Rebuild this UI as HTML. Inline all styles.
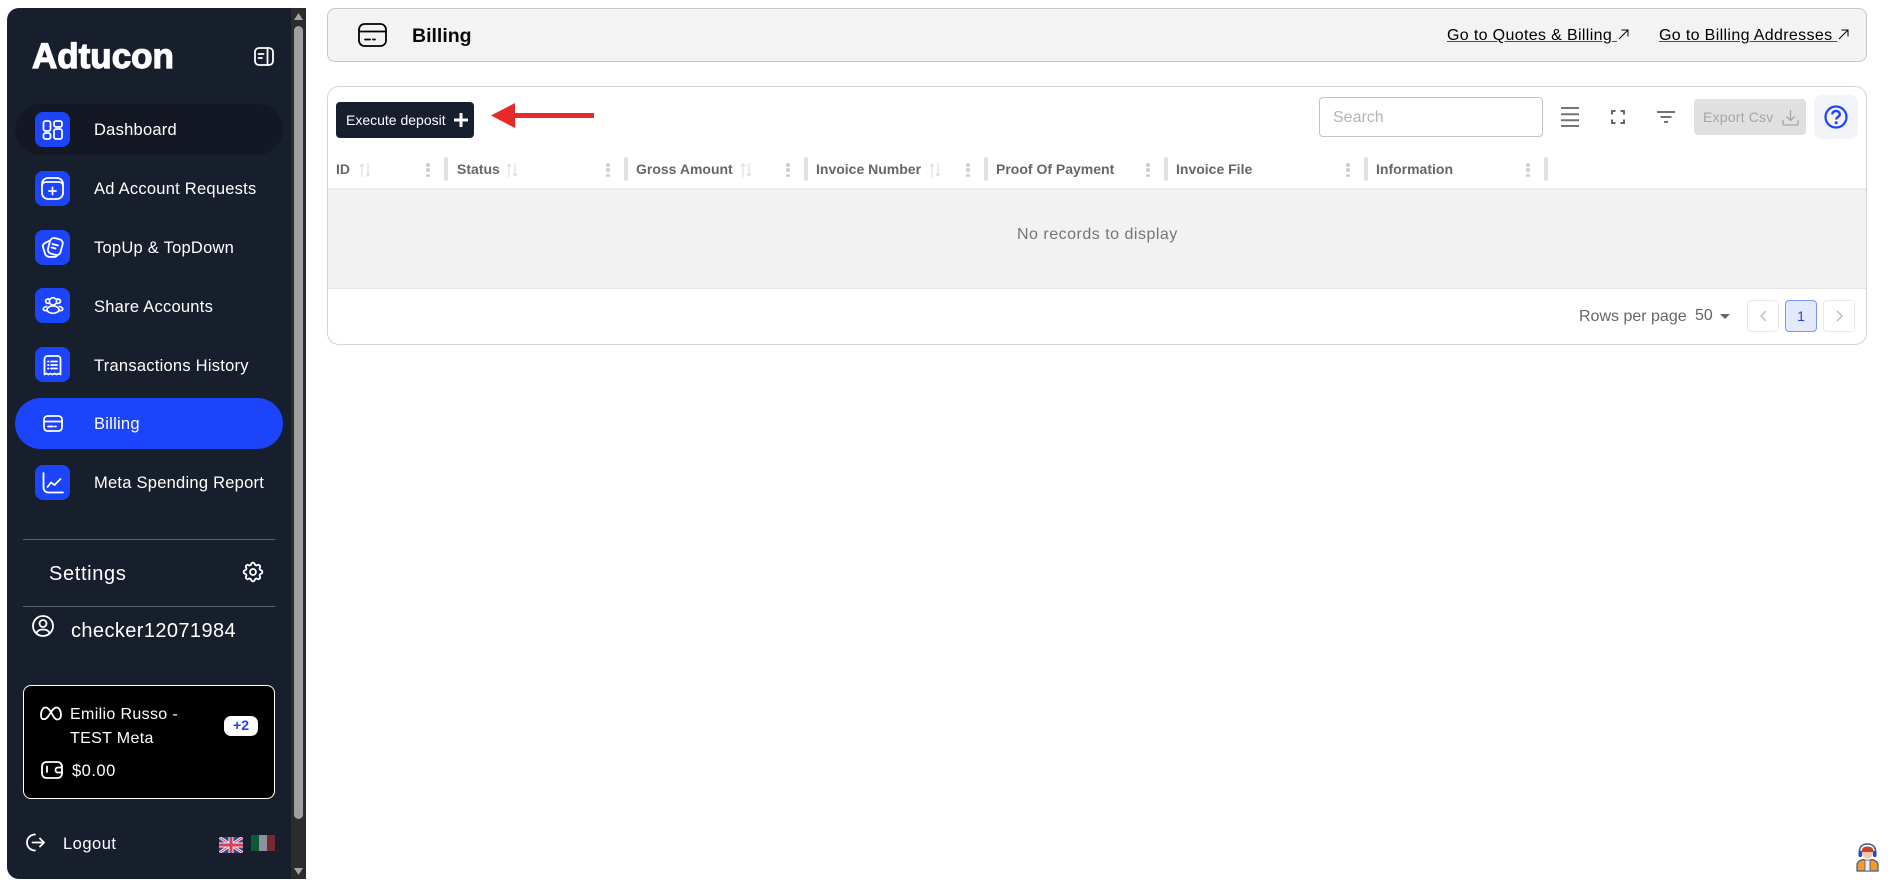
<!DOCTYPE html>
<html lang="en">
<head>
<meta charset="utf-8">
<title>Billing</title>
<style>
html,body{margin:0;padding:0;width:1897px;height:886px;overflow:hidden;background:#fff;font-family:"Liberation Sans",sans-serif;}
.a{position:absolute;white-space:nowrap;}
.t{position:absolute;white-space:nowrap;line-height:20px;}
svg{position:absolute;display:block;fill:none;}
.side{position:absolute;left:7px;top:8px;width:284px;height:871px;background:#171e2c;border-radius:12px 0 0 12px;}
.ib{position:absolute;left:35px;width:35px;height:35px;border-radius:8px;background:#1c44fb;}
.ni{position:absolute;left:94px;color:#fff;font-size:16.5px;line-height:20px;letter-spacing:.25px;white-space:nowrap;}
.w{stroke:#fff;stroke-width:1.8;stroke-linecap:round;stroke-linejoin:round;}
.th{position:absolute;top:160px;font-size:14px;font-weight:700;color:#666;line-height:18px;white-space:nowrap;}
.sep{position:absolute;top:157px;width:4px;height:24px;background:#e0e0e0;border-radius:2px;}
.dots{position:absolute;top:163px;width:4px;height:14px;}
.dots i{display:block;width:3.5px;height:3.5px;border-radius:50%;background:#cfcfcf;margin-bottom:1.8px;}
.pg{position:absolute;top:300px;width:30px;height:30px;border:1px solid #e8e8e8;border-radius:4px;background:#fff;}
a{color:#000;text-decoration:underline;text-decoration-color:#1c44fb;letter-spacing:.35px;}
a svg{position:static;display:inline-block;vertical-align:0;margin-left:1px;}
</style>
</head>
<body>
<!-- sidebar -->
<div class="side"></div>
<div class="a" style="left:291px;top:8px;width:15px;height:871px;background:#2c2c2c;"></div>
<div class="a" style="left:294px;top:26px;width:9px;height:793px;background:#9f9f9f;border-radius:5px;"></div>
<svg style="left:294px;top:13px" width="9" height="7"><path d="M4.5 0L9 7H0Z" fill="#a5a5a5"/></svg>
<svg style="left:294px;top:868px" width="9" height="7"><path d="M0 0H9L4.5 7Z" fill="#a5a5a5"/></svg>

<div class="a" style="left:32px;top:37px;font-size:35px;line-height:40px;font-weight:700;color:#fff;-webkit-text-stroke:1.2px #fff;">Adtucon</div>
<svg style="left:254px;top:47px" width="20" height="19" viewBox="0 0 20 19"><rect class="w" x="1" y="1" width="18" height="17" rx="4"/><path class="w" d="M13.500 1V18M4.500 7H9.500M4.500 11H8"/></svg>

<div class="a" style="left:15px;top:104px;width:268px;height:51px;border-radius:26px;background:#131824;"></div>
<div class="a" style="left:15px;top:398px;width:268px;height:51px;border-radius:26px;background:#1c44fb;"></div>

<div class="ib" style="top:112px"></div>
<svg style="left:42px;top:120px" width="21" height="20" viewBox="0 0 21 20"><rect class="w" x="1.500" y="1" width="7" height="10" rx="2"/><rect class="w" x="12" y="1" width="8" height="6" rx="2"/><rect class="w" x="1.500" y="13" width="7" height="6" rx="2"/><rect class="w" x="12" y="9" width="8" height="10" rx="2"/></svg>
<div class="ni" style="top:120px">Dashboard</div>

<div class="ib" style="top:171px"></div>
<svg style="left:41px;top:177px" width="23" height="23" viewBox="0 0 23 23"><rect class="w" x="1" y="1" width="21" height="21" rx="6"/><path class="w" d="M1 9C1 6.500 3 5 5.500 5H17.500C20 5 22 6.500 22 9M11.500 10.500V17.500M8 14H15"/></svg>
<div class="ni" style="top:179px">Ad Account Requests</div>

<div class="ib" style="top:230px"></div>
<svg style="left:41px;top:236px" width="23" height="23" viewBox="0 0 23 23"><rect class="w" x="7.800" y="2.500" width="13" height="16" rx="4" transform="rotate(15 14.300 10.500)"/><path class="w" d="M8 5L4 7C2.500 8 1.500 9.500 2 11L4 17.500C4.500 19.500 6 20.500 8 20.800L13 21C14.500 21 15.500 20.500 16 19.500"/><path class="w" d="M11.500 8L17 9.500M10.500 11.500L14.500 12.500"/></svg>
<div class="ni" style="top:238px">TopUp &amp; TopDown</div>

<div class="ib" style="top:288px"></div>
<svg style="left:42px;top:296px" width="22" height="19" viewBox="0 0 24 19"><circle class="w" cx="12" cy="5" r="4"/><ellipse class="w" cx="12" cy="14" rx="6.500" ry="4"/><path class="w" d="M7.500 2.500C5 2 3.500 4 4 5.500C4.500 7 6.500 7.500 8 7M16.500 2.500C19 2 20.500 4 20 5.500C19.500 7 17.500 7.500 16 7M5 10.500C2.500 11 1 12.500 1.500 14C2 15 4 15.500 5.500 15M19 10.500C21.500 11 23 12.500 22.500 14C22 15 20 15.500 18.500 15"/></svg>
<div class="ni" style="top:297px">Share Accounts</div>

<div class="ib" style="top:347px"></div>
<svg style="left:43px;top:355px" width="19" height="21" viewBox="0 0 19 21"><path class="w" d="M1.500 4C1.500 2.300 2.800 1 4.500 1H14.500C16.200 1 17.500 2.300 17.500 4V19.500L15.500 18.500L13.500 19.500L11.500 18.500L9.500 19.500L7.500 18.500L5.500 19.500L3.500 18.500L1.500 19.500Z"/><path class="w" d="M5 6.500H5.500M8 6.500H14M5 10H5.500M8 10H14M5 13.500H5.500M8 13.500H14"/></svg>
<div class="ni" style="top:356px">Transactions History</div>

<svg style="left:43px;top:415px" width="20" height="17" viewBox="0 0 20 17"><rect class="w" x="1" y="1" width="18" height="15" rx="3.500"/><path class="w" d="M1 6.500H19M5 11.500H10M12 11.500H13"/></svg>
<div class="ni" style="top:414px">Billing</div>

<div class="ib" style="top:465px"></div>
<svg style="left:42px;top:472px" width="22" height="22" viewBox="0 0 22 22"><path class="w" d="M1.500 1V15C1.500 18.500 3.500 20.500 7 20.500H21M5.500 15L9 10.500L12.500 13L18.500 7"/></svg>
<div class="ni" style="top:473px">Meta Spending Report</div>

<div class="a" style="left:23px;top:539px;width:252px;height:1px;background:#5c6068;"></div>
<div class="t" style="left:49px;top:564px;font-size:20px;color:#fff;letter-spacing:.65px;">Settings</div>
<svg style="left:241px;top:560px" width="24" height="24" viewBox="0 0 24 24"><path class="w" d="M10.300 2.600C10.800.8 13.200.8 13.700 2.600C14 3.800 15.400 4.400 16.500 3.700C18.100 2.800 19.800 4.500 18.900 6.100C18.200 7.200 18.800 8.600 20 8.900C21.800 9.400 21.800 11.800 20 12.300H20C18.800 12.600 18.200 14 18.900 15.100C19.800 16.700 18.100 18.400 16.500 17.500C15.400 16.800 14 17.400 13.700 18.600C13.200 20.400 10.800 20.400 10.300 18.600C10 17.400 8.600 16.800 7.500 17.500C5.900 18.400 4.200 16.700 5.100 15.100C5.800 14 5.200 12.600 4 12.300C2.200 11.800 2.200 9.400 4 8.900C5.200 8.600 5.800 7.200 5.100 6.100C4.200 4.500 5.900 2.800 7.500 3.700C8.600 4.400 10 3.800 10.300 2.600Z" transform="translate(0 1.400)"/><circle class="w" cx="12" cy="12" r="3"/></svg>
<div class="a" style="left:23px;top:606px;width:252px;height:1px;background:#5c6068;"></div>
<svg style="left:32px;top:615px" width="22" height="22" viewBox="0 0 22 22"><circle class="w" cx="11" cy="11" r="10"/><circle class="w" cx="11" cy="8.500" r="3.500"/><path class="w" d="M4.500 18C5.500 15.500 8 14.500 11 14.500C14 14.500 16.500 15.500 17.500 18"/></svg>
<div class="t" style="left:71px;top:621px;font-size:20px;color:#fff;letter-spacing:.4px;">checker12071984</div>

<div class="a" style="left:23px;top:685px;width:250px;height:112px;background:#000;border:1px solid #fff;border-radius:8px;"></div>
<svg style="left:40px;top:706px" width="22" height="15" viewBox="0 0 22 15"><path class="w" d="M3 13C1.800 13 1 11.500 1 9C1 4.500 3 1.500 5.500 1.500C8.500 1.500 11 6 13.500 10.500C14.700 12.500 15.800 13.500 17.300 13.500C19.500 13.500 21 12 21 9C21 4.500 19 1.500 16.500 1.500C13.500 1.500 11 6 8.500 10C7 12.300 5 13.500 3 13Z"/></svg>
<div class="t" style="left:70px;top:705px;font-size:16px;color:#fff;letter-spacing:.35px;">Emilio Russo -</div>
<div class="t" style="left:70px;top:729px;font-size:16px;color:#fff;letter-spacing:.35px;">TEST Meta</div>
<div class="a" style="left:224px;top:716px;width:34px;height:20px;background:#fff;border-radius:7px;"></div>
<div class="t" style="left:224px;top:715px;width:34px;text-align:center;font-size:14px;font-weight:700;color:#2140f0;">+2</div>
<svg style="left:41px;top:761px" width="22" height="18" viewBox="0 0 22 18"><rect class="w" x="1" y="1" width="20" height="16" rx="4.500"/><path class="w" d="M6 5.500V11M21 6.500H17C15.500 6.500 14.500 7.500 14.500 9C14.500 10.500 15.500 11.500 17 11.500H21"/></svg>
<div class="t" style="left:72px;top:761px;font-size:16.500px;color:#fff;letter-spacing:.5px;">$0.00</div>

<svg style="left:26px;top:833px" width="19" height="19" viewBox="0 0 19 19"><path class="w" d="M9 1.500C4.500 1.500 1 5 1 9.500C1 14 4.500 17.500 9 17.500M6.500 9.500H18M14 5.500L18 9.500L14 13.500"/></svg>
<div class="t" style="left:63px;top:834px;font-size:16.500px;color:#fff;letter-spacing:.5px;">Logout</div>
<svg style="left:219px;top:837px" width="24" height="16" viewBox="0 0 24 16"><rect width="24" height="16" fill="#3a4590"/><path d="M0 0L24 16M24 0L0 16" stroke="#ececf2" stroke-width="3"/><path d="M0 0L24 16M24 0L0 16" stroke="#d8405a" stroke-width="1"/><path d="M12 0V16M0 8H24" stroke="#ececf2" stroke-width="5"/><path d="M12 0V16M0 8H24" stroke="#d8405a" stroke-width="3"/></svg>
<svg style="left:251px;top:835px" width="24" height="16" viewBox="0 0 24 16"><rect width="8" height="16" fill="#0c5a3a"/><rect x="8" width="8" height="16" fill="#8f929e"/><rect x="16" width="8" height="16" fill="#782733"/></svg>

<!-- header -->
<div class="a" style="left:327px;top:8px;width:1538px;height:52px;background:#f3f3f3;border:1px solid #c8c8c8;border-radius:8px;"></div>
<svg style="left:358px;top:23px" width="29" height="24" viewBox="0 0 29 24"><rect x="1" y="1" width="27" height="22" rx="5.500" stroke="#000" stroke-width="1.800"/><path d="M1 8.500H28M7 16.500H12M15 16.500H17" stroke="#000" stroke-width="1.800" stroke-linecap="round"/></svg>
<div class="t" style="left:412px;top:26px;font-size:19.500px;font-weight:700;color:#0a0a0a;">Billing</div>
<div class="t" style="left:1447px;top:26px;font-size:16px;"><a>Go to Quotes &amp; Billing <svg width="11" height="11" viewBox="0 0 11 11"><path d="M1 10L10 1M3.500 1H10V7.500" stroke="#000" stroke-width="1"/></svg></a></div>
<div class="t" style="left:1659px;top:26px;font-size:16px;"><a>Go to Billing Addresses <svg width="11" height="11" viewBox="0 0 11 11"><path d="M1 10L10 1M3.500 1H10V7.500" stroke="#000" stroke-width="1"/></svg></a></div>

<!-- card -->
<div class="a" style="left:327px;top:86px;width:1538px;height:257px;border:1px solid #d5d5d5;border-radius:12px;"></div>
<div class="a" style="left:336px;top:102px;width:138px;height:36px;background:#171e2e;border-radius:4px;"></div>
<div class="t" style="left:346px;top:110px;font-size:14px;color:#fff;">Execute deposit</div>
<svg style="left:454px;top:113px" width="14" height="14" viewBox="0 0 14 14"><path d="M7 0V14M0 7H14" stroke="#fff" stroke-width="3"/></svg>
<svg style="left:490px;top:102px" width="106" height="28" viewBox="0 0 106 28"><path d="M1 13.500L25 1V11H104V16H25V26Z" fill="#e92a2a"/></svg>

<div class="a" style="left:1319px;top:97px;width:222px;height:38px;border:1px solid #c4c4c4;border-radius:4px;"></div>
<div class="t" style="left:1333px;top:108px;font-size:16px;color:#b4b4b4;">Search</div>
<svg style="left:1561px;top:107px" width="18" height="20" viewBox="0 0 18 20"><path d="M0 1H18M0 7.300H18M0 13.300H18M0 19H18" stroke="#757575" stroke-width="2"/></svg>
<svg style="left:1611px;top:110px" width="14" height="14" viewBox="0 0 14 14"><path d="M1 4.500V1H4.500M9.500 1H13V4.500M13 9.500V13H9.500M4.500 13H1V9.500" stroke="#666" stroke-width="2"/></svg>
<svg style="left:1657px;top:111px" width="18" height="12" viewBox="0 0 18 12"><path d="M0 1H18M3.500 6H14.500M7 11H11" stroke="#757575" stroke-width="2"/></svg>
<div class="a" style="left:1694px;top:99px;width:112px;height:36px;background:#e0e0e0;border-radius:4px;"></div>
<div class="t" style="left:1703px;top:107px;font-size:14px;color:#a6a6a6;letter-spacing:.2px;">Export Csv</div>
<svg style="left:1782px;top:109px" width="17" height="17" viewBox="0 0 17 17"><path d="M8.500 1V11M4.500 7.500L8.500 11.500L12.500 7.500M1 11V15C1 15.600 1.500 16 2 16H15C15.500 16 16 15.600 16 15V11" stroke="#a6a6a6" stroke-width="1.300"/></svg>
<div class="a" style="left:1814px;top:95px;width:44px;height:44px;background:#f3f4f7;border-radius:8px;"></div>
<svg style="left:1824px;top:105px" width="24" height="24" viewBox="0 0 24 24"><circle cx="12" cy="12" r="10.500" stroke="#1c44fb" stroke-width="2.200"/><path d="M8.300 9.500C8.300 7.300 10 6 12 6C14.200 6 15.800 7.400 15.800 9.300C15.800 11.900 12.200 11.900 12.200 14.500" stroke="#1c44fb" stroke-width="2.400"/><circle cx="12.200" cy="17.800" r="1.500" fill="#1c44fb"/></svg>

<!-- table head -->
<div class="th" style="left:336px">ID</div>
<div class="th" style="left:457px">Status</div>
<div class="th" style="left:636px">Gross Amount</div>
<div class="th" style="left:816px">Invoice Number</div>
<div class="th" style="left:996px">Proof Of Payment</div>
<div class="th" style="left:1176px">Invoice File</div>
<div class="th" style="left:1376px">Information</div>
<svg style="left:359px;top:163px" width="12" height="14" viewBox="0 0 12 14"><path d="M3 14V1M1 3.500L3 1L5 3.500M9 0V13M7 10.500L9 13L11 10.500" stroke="#d8d8d8" stroke-width="1"/></svg>
<svg style="left:506px;top:163px" width="12" height="14" viewBox="0 0 12 14"><path d="M3 14V1M1 3.500L3 1L5 3.500M9 0V13M7 10.500L9 13L11 10.500" stroke="#d8d8d8" stroke-width="1"/></svg>
<svg style="left:740px;top:163px" width="12" height="14" viewBox="0 0 12 14"><path d="M3 14V1M1 3.500L3 1L5 3.500M9 0V13M7 10.500L9 13L11 10.500" stroke="#d8d8d8" stroke-width="1"/></svg>
<svg style="left:929px;top:163px" width="12" height="14" viewBox="0 0 12 14"><path d="M3 14V1M1 3.500L3 1L5 3.500M9 0V13M7 10.500L9 13L11 10.500" stroke="#d8d8d8" stroke-width="1"/></svg>
<div class="dots" style="left:426px"><i></i><i></i><i></i></div>
<div class="dots" style="left:606px"><i></i><i></i><i></i></div>
<div class="dots" style="left:786px"><i></i><i></i><i></i></div>
<div class="dots" style="left:966px"><i></i><i></i><i></i></div>
<div class="dots" style="left:1146px"><i></i><i></i><i></i></div>
<div class="dots" style="left:1346px"><i></i><i></i><i></i></div>
<div class="dots" style="left:1526px"><i></i><i></i><i></i></div>
<div class="sep" style="left:444px"></div>
<div class="sep" style="left:624px"></div>
<div class="sep" style="left:804px"></div>
<div class="sep" style="left:984px"></div>
<div class="sep" style="left:1164px"></div>
<div class="sep" style="left:1364px"></div>
<div class="sep" style="left:1544px"></div>

<!-- table body -->
<div class="a" style="left:328px;top:188px;width:1538px;height:100px;background:#f2f2f2;border-bottom:1px solid #e4e4e4;box-shadow:inset 0 3px 3px -2px rgba(0,0,0,.06);"></div>
<div class="t" style="left:1017px;top:225px;font-size:16px;color:#757575;letter-spacing:.5px;">No records to display</div>

<!-- footer -->
<div class="t" style="left:1579px;top:307px;font-size:16px;color:#666;">Rows per page</div>
<div class="t" style="left:1695px;top:306px;font-size:16px;color:#666;">50</div>
<svg style="left:1720px;top:314px" width="10" height="5"><path d="M0 0H10L5 5Z" fill="#666"/></svg>
<div class="pg" style="left:1747px"></div>
<svg style="left:1760px;top:310px" width="7" height="12" viewBox="0 0 7 12"><path d="M6 1L1 6L6 11" stroke="#bdbdbd" stroke-width="1.500"/></svg>
<div class="pg" style="left:1785px;background:#e4e8fd;border-color:#7f95f5;"></div>
<div class="t" style="left:1785px;top:306px;width:32px;text-align:center;font-size:14px;color:#2140f0;">1</div>
<div class="pg" style="left:1823px"></div>
<svg style="left:1836px;top:310px" width="7" height="12" viewBox="0 0 7 12"><path d="M1 1L6 6L1 11" stroke="#bdbdbd" stroke-width="1.500"/></svg>

<!-- support avatar -->
<svg style="left:1856px;top:843px" width="23" height="29" viewBox="0 0 23 29"><path d="M1 28V22C1 19 3 17.500 7 16.500L11.500 18L16 16.500C20 17.500 22 19 22 22V28Z" fill="#f59a23" stroke="#3d5a8a" stroke-width="1.200"/><path d="M9 17H14V28H9Z" fill="#e8eef6" stroke="#3d5a8a" stroke-width=".8"/><circle cx="11.500" cy="10" r="5.500" fill="#f6c4a6"/><path d="M5.500 9C5.500 5 8 3.500 11.500 3.500C15 3.500 17.500 5 17.500 9Z" fill="#c8402e"/><path d="M3.500 11V8C3.500 3.500 7 1 11.500 1C16 1 19.500 3.500 19.500 8V11" stroke="#3d5a8a" stroke-width="1.600"/><rect x="2.500" y="8" width="3.500" height="6" rx="1.500" fill="#2a46c8"/><rect x="17" y="8" width="3.500" height="6" rx="1.500" fill="#2a46c8"/></svg>
</body>
</html>
